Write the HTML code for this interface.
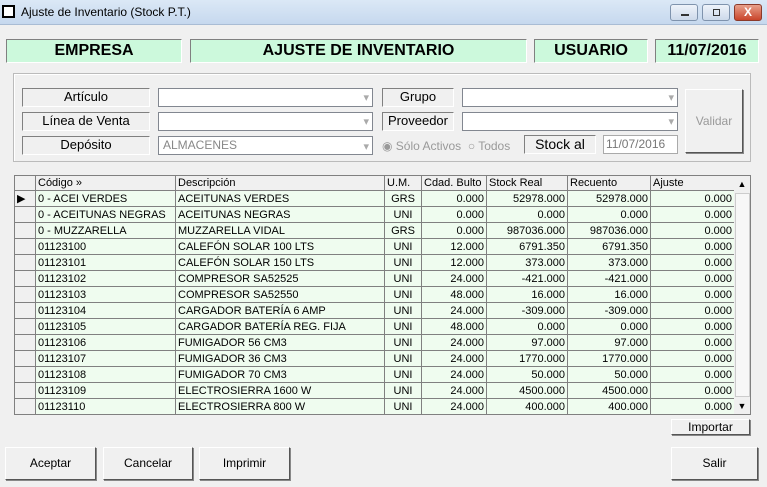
<!DOCTYPE html><html><head><style>
*{box-sizing:border-box;margin:0;padding:0}
body{width:767px;height:487px;background:#f0f0f0;font-family:"Liberation Sans",sans-serif;font-size:11px;position:relative;overflow:hidden}
.a{position:absolute}
.tb{left:0;top:0;width:767px;height:25px;background:linear-gradient(#dbe8f6,#c6d8ee);border-bottom:1px solid #a9bcd4}
.hb{background:#ccf9dc;border:1px solid #808080;border-right-color:#fff;border-bottom-color:#fff;font-weight:bold;font-size:16px;text-align:center;line-height:21px;top:39px;height:24px}
.lbl{border:1px solid #808080;border-right-color:#fff;border-bottom-color:#fff;background:#f0f0f0;text-align:center;font-size:13px;line-height:16px;height:19px}
.cb{background:#fff;border:1px solid #828790;height:19px}
.cb:after{content:"▾";position:absolute;right:3px;top:2px;color:#aaa;font-size:11px}
.btn{border:1px solid #fff;border-right-color:#555;border-bottom-color:#555;background:#f0f0f0;text-align:center;font-size:12px;box-shadow:1px 1px 0 #888}
table{border-collapse:collapse;position:absolute;left:14px;top:175px;table-layout:fixed}
td{border:1px solid #808080;height:16px;font-size:11px;padding:0 2px;white-space:nowrap;overflow:hidden;background:#effcef}
tr.h td{background:#f0f0f0;height:15px}
td.i{background:#f0f0f0}
.r{text-align:right}.c{text-align:center}
</style></head><body>
<div class="a tb"></div>
<div class="a" style="left:2px;top:5px;width:13px;height:13px;background:#fff;border:2px solid #000"></div>
<div class="a" style="left:21px;top:5px;font-size:12px">Ajuste de Inventario (Stock P.T.)</div>
<div class="a" style="left:670px;top:4px;width:28px;height:17px;border:1px solid #7f93ad;border-radius:3px;background:linear-gradient(#eef3fa,#cdd9ea)"><div class="a" style="left:10px;top:9px;width:8px;height:2px;background:#333"></div></div>
<div class="a" style="left:702px;top:4px;width:28px;height:17px;border:1px solid #7f93ad;border-radius:3px;background:linear-gradient(#eef3fa,#cdd9ea)"><div class="a" style="left:10px;top:4px;width:7px;height:7px;border:1px solid #333"></div></div>
<div class="a" style="left:734px;top:4px;width:28px;height:17px;border:1px solid #8b3a2a;border-radius:3px;background:linear-gradient(#e8a08a,#c9452b);color:#fff;font-weight:bold;text-align:center;font-size:12px;line-height:15px">X</div>
<div class="a hb" style="left:6px;width:176px">EMPRESA</div>
<div class="a hb" style="left:190px;width:337px">AJUSTE DE INVENTARIO</div>
<div class="a hb" style="left:534px;width:114px">USUARIO</div>
<div class="a hb" style="left:655px;width:104px">11/07/2016</div>
<div class="a" style="left:13px;top:73px;width:738px;height:89px;border:1px solid #bbb;box-shadow:inset 1px 1px 0 #fff"></div>
<div class="a lbl" style="left:22px;top:88px;width:128px">Artículo</div>
<div class="a lbl" style="left:22px;top:112px;width:128px">Línea de Venta</div>
<div class="a lbl" style="left:22px;top:136px;width:128px">Depósito</div>
<div class="a cb" style="left:158px;top:88px;width:215px"></div>
<div class="a cb" style="left:158px;top:112px;width:215px"></div>
<div class="a cb" style="left:158px;top:136px;width:215px;color:#888;font-size:12px;padding-left:4px;line-height:16px">ALMACENES</div>
<div class="a lbl" style="left:382px;top:88px;width:72px">Grupo</div>
<div class="a lbl" style="left:382px;top:112px;width:72px">Proveedor</div>
<div class="a cb" style="left:462px;top:88px;width:216px"></div>
<div class="a cb" style="left:462px;top:112px;width:216px"></div>
<div class="a" style="left:382px;top:139px;color:#999;font-size:12px">◉ Sólo Activos &nbsp;○ Todos</div>
<div class="a lbl" style="left:524px;top:135px;width:72px;font-size:14px">Stock al</div>
<div class="a" style="left:603px;top:135px;width:75px;height:19px;border:1px solid #aaa;background:#fff;color:#777;font-size:12px;line-height:16px;padding-left:2px">11/07/2016</div>
<div class="a btn" style="left:685px;top:89px;width:58px;height:64px;line-height:62px;color:#999">Validar</div>
<table>
<colgroup><col style="width:21px"><col style="width:140px"><col style="width:209px"><col style="width:37px"><col style="width:65px"><col style="width:81px"><col style="width:83px"><col style="width:84px"></colgroup>
<tr class="h"><td></td><td>Código »</td><td>Descripción</td><td>U.M.</td><td>Cdad. Bulto</td><td>Stock Real</td><td>Recuento</td><td>Ajuste</td></tr>
<tr><td class="i">▶</td><td>0 - ACEI VERDES</td><td>ACEITUNAS VERDES</td><td class="c">GRS</td><td class="r">0.000</td><td class="r">52978.000</td><td class="r">52978.000</td><td class="r">0.000</td></tr>
<tr><td class="i"></td><td>0 - ACEITUNAS NEGRAS</td><td>ACEITUNAS NEGRAS</td><td class="c">UNI</td><td class="r">0.000</td><td class="r">0.000</td><td class="r">0.000</td><td class="r">0.000</td></tr>
<tr><td class="i"></td><td>0 - MUZZARELLA</td><td>MUZZARELLA VIDAL</td><td class="c">GRS</td><td class="r">0.000</td><td class="r">987036.000</td><td class="r">987036.000</td><td class="r">0.000</td></tr>
<tr><td class="i"></td><td>01123100</td><td>CALEFÓN SOLAR 100 LTS</td><td class="c">UNI</td><td class="r">12.000</td><td class="r">6791.350</td><td class="r">6791.350</td><td class="r">0.000</td></tr>
<tr><td class="i"></td><td>01123101</td><td>CALEFÓN SOLAR 150 LTS</td><td class="c">UNI</td><td class="r">12.000</td><td class="r">373.000</td><td class="r">373.000</td><td class="r">0.000</td></tr>
<tr><td class="i"></td><td>01123102</td><td>COMPRESOR SA52525</td><td class="c">UNI</td><td class="r">24.000</td><td class="r">-421.000</td><td class="r">-421.000</td><td class="r">0.000</td></tr>
<tr><td class="i"></td><td>01123103</td><td>COMPRESOR SA52550</td><td class="c">UNI</td><td class="r">48.000</td><td class="r">16.000</td><td class="r">16.000</td><td class="r">0.000</td></tr>
<tr><td class="i"></td><td>01123104</td><td>CARGADOR BATERÍA 6 AMP</td><td class="c">UNI</td><td class="r">24.000</td><td class="r">-309.000</td><td class="r">-309.000</td><td class="r">0.000</td></tr>
<tr><td class="i"></td><td>01123105</td><td>CARGADOR BATERÍA REG. FIJA</td><td class="c">UNI</td><td class="r">48.000</td><td class="r">0.000</td><td class="r">0.000</td><td class="r">0.000</td></tr>
<tr><td class="i"></td><td>01123106</td><td>FUMIGADOR 56 CM3</td><td class="c">UNI</td><td class="r">24.000</td><td class="r">97.000</td><td class="r">97.000</td><td class="r">0.000</td></tr>
<tr><td class="i"></td><td>01123107</td><td>FUMIGADOR 36 CM3</td><td class="c">UNI</td><td class="r">24.000</td><td class="r">1770.000</td><td class="r">1770.000</td><td class="r">0.000</td></tr>
<tr><td class="i"></td><td>01123108</td><td>FUMIGADOR 70 CM3</td><td class="c">UNI</td><td class="r">24.000</td><td class="r">50.000</td><td class="r">50.000</td><td class="r">0.000</td></tr>
<tr><td class="i"></td><td>01123109</td><td>ELECTROSIERRA 1600 W</td><td class="c">UNI</td><td class="r">24.000</td><td class="r">4500.000</td><td class="r">4500.000</td><td class="r">0.000</td></tr>
<tr><td class="i"></td><td>01123110</td><td>ELECTROSIERRA 800 W</td><td class="c">UNI</td><td class="r">24.000</td><td class="r">400.000</td><td class="r">400.000</td><td class="r">0.000</td></tr>
</table>
<div class="a" style="left:734px;top:175px;width:17px;height:240px;background:#f0f0f0;border:1px solid #808080;border-left:none"></div>
<div class="a" style="left:734px;top:176px;width:16px;height:16px;font-size:9px;text-align:center;line-height:16px">▲</div>
<div class="a" style="left:735px;top:193px;width:15px;height:204px;border:1px solid #ccc;background:#f7f7f7"></div>
<div class="a" style="left:734px;top:398px;width:16px;height:16px;font-size:9px;text-align:center;line-height:16px">▼</div>
<div class="a btn" style="left:671px;top:419px;width:79px;height:16px;line-height:14px">Importar</div>
<div class="a btn" style="left:5px;top:447px;width:91px;height:33px;line-height:31px">Aceptar</div>
<div class="a btn" style="left:103px;top:447px;width:90px;height:33px;line-height:31px">Cancelar</div>
<div class="a btn" style="left:199px;top:447px;width:91px;height:33px;line-height:31px">Imprimir</div>
<div class="a btn" style="left:671px;top:447px;width:87px;height:33px;line-height:31px">Salir</div>
</body></html>
